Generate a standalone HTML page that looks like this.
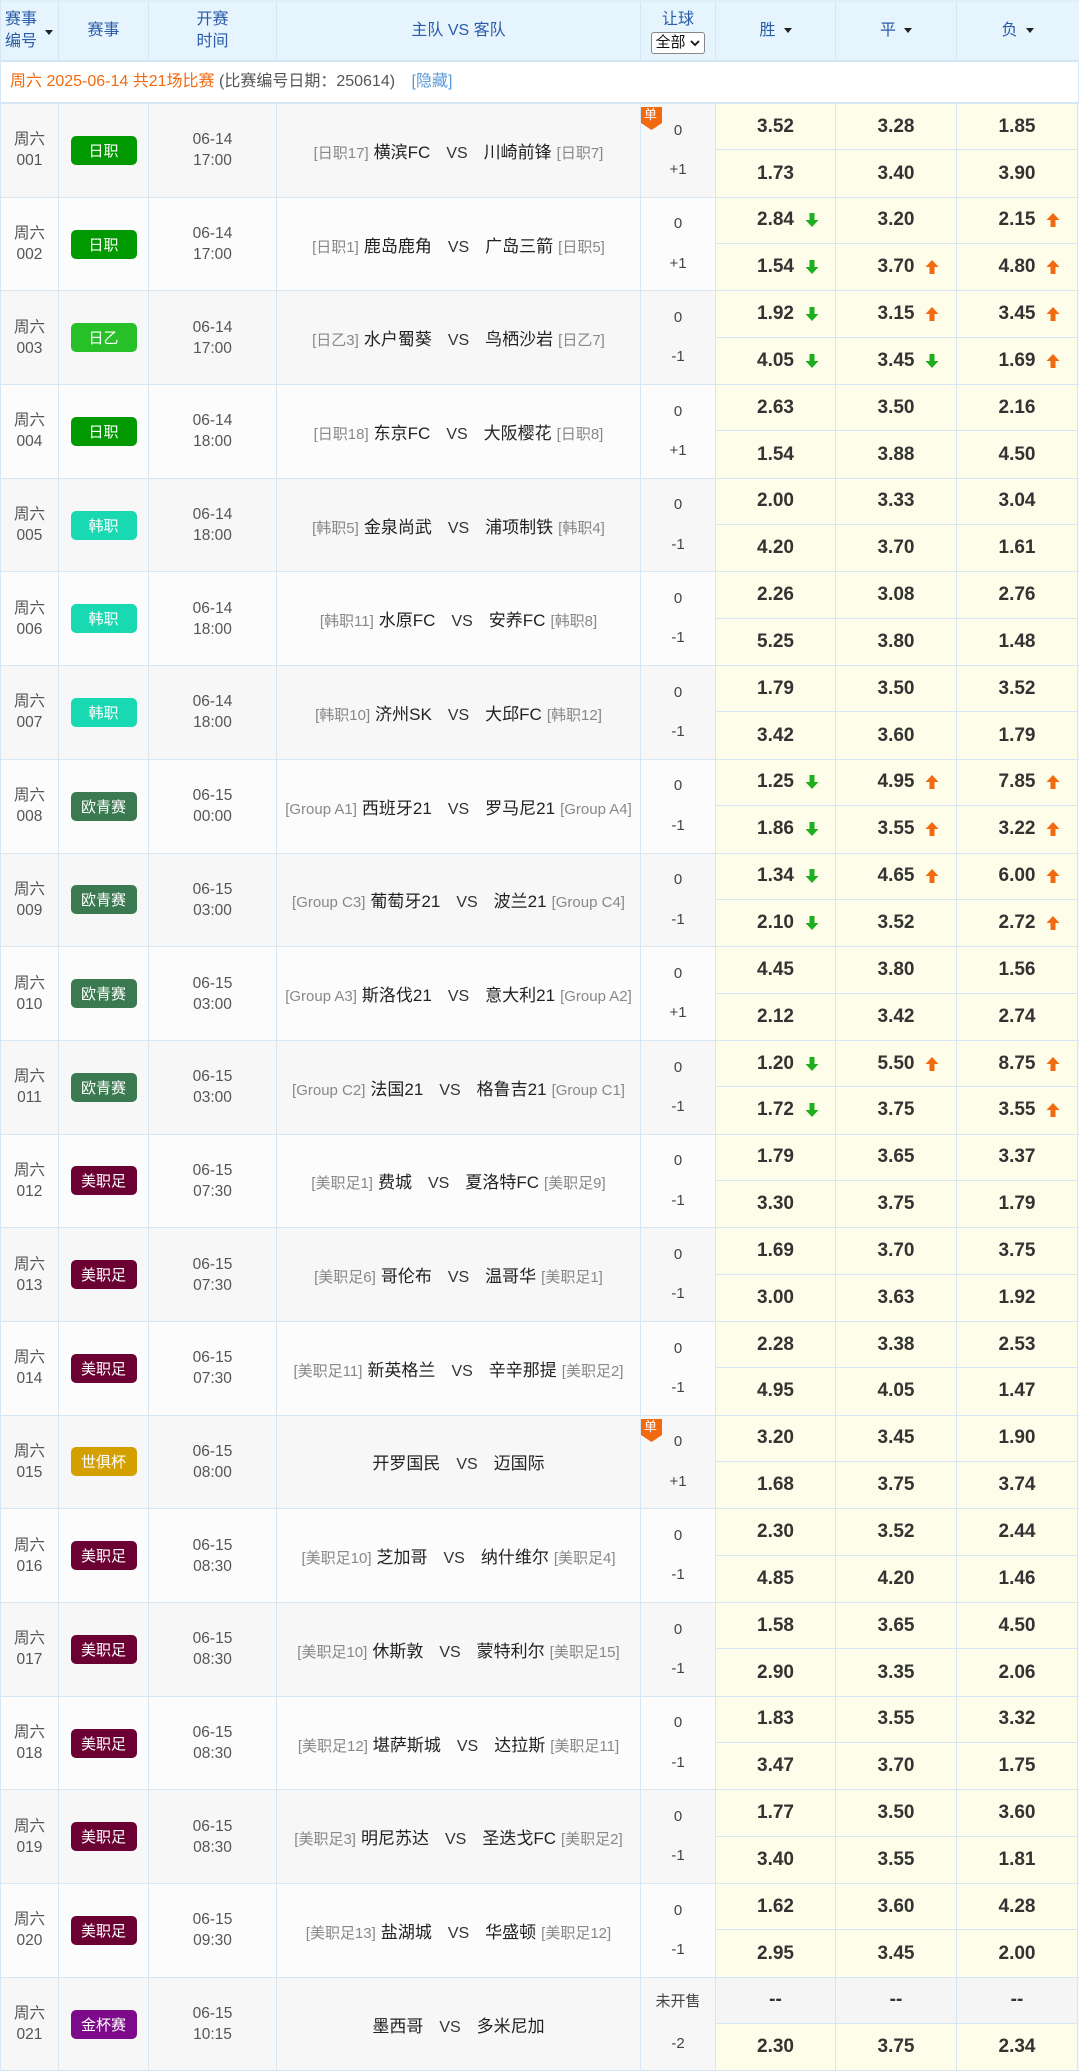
<!DOCTYPE html>
<html><head><meta charset="utf-8">
<style>
*{margin:0;padding:0;box-sizing:border-box}
body{width:1080px;height:2072px;overflow:hidden;background:#fff;font-family:"Liberation Sans","Noto Sans CJK SC",sans-serif;color:#333}
.wrap{width:1079px;border-left:1px solid #d6e6f4;border-top:2px solid #e0eefa}
.hd{display:grid;grid-template-columns:58px 90px 128px 364px 75px 120px 121px 121px;height:60px;background:#e5f4fd;border-bottom:2px solid #d3e6f4;overflow:hidden}
.hd>div{border-right:1px solid #d3e6f4;display:flex;align-items:center;justify-content:center;color:#2a5ca8;font-size:16px;line-height:22px;text-align:center;position:relative;white-space:nowrap}
.tri{display:inline-block;width:0;height:0;border-left:4px solid transparent;border-right:4px solid transparent;border-top:5px solid #222;margin-left:8px;vertical-align:middle}
.sel{display:flex;align-items:center;justify-content:center;border:1px solid #888;border-radius:3px;background:#fff;color:#111;font-size:15px;line-height:19px;width:54px;height:22px;margin:1px auto 0;white-space:nowrap}
.info{height:42px;border-bottom:2px solid #d6e6f4;border-right:1px solid #d6e6f4;padding-left:9px;font-size:16px;line-height:40px;color:#555;white-space:nowrap}
.info .o{color:#f26a10}.info .h{color:#5a9ad8;margin-left:12px}
.m{display:grid;grid-template-columns:58px 90px 128px 364px 75px 120px 121px 121px;grid-template-rows:1fr 1fr;height:93.7px;border-bottom:1px solid #d6e6f4;background:#fcfcfc}
.m.g{background:#f7f7f7}
.m>div{border-right:1px solid #d6e6f4;display:flex;align-items:center;justify-content:center;position:relative}
.m>div:nth-child(1){grid-area:1/1/3/2}
.m>div:nth-child(2){grid-area:1/2/3/3}
.m>div:nth-child(3){grid-area:1/3/3/4}
.m>div:nth-child(4){grid-area:1/4/3/5}
.m>div:nth-child(5){grid-area:1/5/2/6}
.m>div:nth-child(6){grid-area:2/5/3/6}
.m>div:nth-child(7){grid-area:1/6/2/7}
.m>div:nth-child(8){grid-area:1/7/2/8}
.m>div:nth-child(9){grid-area:1/8/2/9}
.m>div:nth-child(10){grid-area:2/6/3/7}
.m>div:nth-child(11){grid-area:2/7/3/8}
.m>div:nth-child(12){grid-area:2/8/3/9}
.n{color:#555;font-size:15.5px;line-height:21px;text-align:center}
.b{width:66px;height:29px;border-radius:5px;color:#fff;font-size:15px;display:flex;align-items:center;justify-content:center}
.t{font-size:17px;color:#222;white-space:nowrap}
.t i{font-style:normal;color:#888;font-size:15px}
.t .v{color:#333;font-size:16px;margin:0 16px}
.t .h{margin-left:5px}.t .a{margin-right:5px}
.r0{font-size:15px;color:#444;padding-top:6px}
.r1{font-size:15px;color:#444;padding-bottom:8px}
.od{background:#fdfde9;font-weight:bold;font-size:19px;color:#333;border-bottom:1px solid #d6e6f4}
.od.l{border-bottom:none}
.od svg{position:absolute;left:calc(50% + 29px);top:50%;margin-top:-8px}
.dan{position:absolute;left:0;top:3px}
.dz{position:absolute;left:3px;top:3px;color:#fff;font-size:13px;line-height:16px}
.gr{background:#f5f5f5}
</style></head><body>
<svg width="0" height="0" style="position:absolute"><defs>
<symbol id="up" viewBox="0 0 14 16"><path d="M7 1L13.5 8H9.5V15H4.5V8H0.5Z" fill="#f26a10"/></symbol>
<symbol id="dn" viewBox="0 0 14 16"><path d="M7 15L13.5 8H9.5V1H4.5V8H0.5Z" fill="#1fae1f"/></symbol>
<symbol id="dan" viewBox="0 0 21 23"><path d="M0 0H21V16L10.5 23L0 16Z" fill="#f26a10"/></symbol>
</defs></svg>
<div class="wrap">
<div class="hd">
<div style="justify-content:flex-start;padding-left:4px;text-align:left"><span>赛事<br>编号</span><span class="tri" style="position:absolute;left:44px;top:28px;margin:0"></span></div>
<div><span>赛事</span></div><div><span>开赛<br>时间</span></div><div><span>主队 VS 客队</span></div>
<div><span style="display:block">让球<span class="sel">全部<svg width="12" height="10" style="margin-left:3px"><path d="M2 3L6 7L10 3" stroke="#111" stroke-width="1.8" fill="none"/></svg></span></span></div>
<div><span>胜<span class="tri"></span></span></div><div><span>平<span class="tri"></span></span></div><div style="border-right:none"><span>负<span class="tri"></span></span></div>
</div>
<div class="info"><span class="o">周六 2025-06-14 共21场比赛</span> (比赛编号日期：250614) <span class="h">[隐藏]</span></div>

<div class="m g"><div class="n"><span>周六<br>001</span></div><div><span class="b" style="background:#009a00">日职</span></div><div class="n"><span>06-14<br>17:00</span></div><div class="t"><span><i>[日职17]</i><span class="h">横滨FC</span><span class="v">VS</span><span class="a">川崎前锋</span><i>[日职7]</i></span></div><div class="r0"><svg class="dan" width="21" height="23"><use href="#dan"/></svg><span class="dz">单</span><span>0</span></div><div class="r1">+1</div><div class="od">3.52</div><div class="od">3.28</div><div class="od">1.85</div><div class="od l">1.73</div><div class="od l">3.40</div><div class="od l">3.90</div></div>

<div class="m"><div class="n"><span>周六<br>002</span></div><div><span class="b" style="background:#009a00">日职</span></div><div class="n"><span>06-14<br>17:00</span></div><div class="t"><span><i>[日职1]</i><span class="h">鹿岛鹿角</span><span class="v">VS</span><span class="a">广岛三箭</span><i>[日职5]</i></span></div><div class="r0">0</div><div class="r1">+1</div><div class="od">2.84<svg width="14" height="16"><use href="#dn"/></svg></div><div class="od">3.20</div><div class="od">2.15<svg width="14" height="16"><use href="#up"/></svg></div><div class="od l">1.54<svg width="14" height="16"><use href="#dn"/></svg></div><div class="od l">3.70<svg width="14" height="16"><use href="#up"/></svg></div><div class="od l">4.80<svg width="14" height="16"><use href="#up"/></svg></div></div>

<div class="m g"><div class="n"><span>周六<br>003</span></div><div><span class="b" style="background:#28c028">日乙</span></div><div class="n"><span>06-14<br>17:00</span></div><div class="t"><span><i>[日乙3]</i><span class="h">水户蜀葵</span><span class="v">VS</span><span class="a">鸟栖沙岩</span><i>[日乙7]</i></span></div><div class="r0">0</div><div class="r1">-1</div><div class="od">1.92<svg width="14" height="16"><use href="#dn"/></svg></div><div class="od">3.15<svg width="14" height="16"><use href="#up"/></svg></div><div class="od">3.45<svg width="14" height="16"><use href="#up"/></svg></div><div class="od l">4.05<svg width="14" height="16"><use href="#dn"/></svg></div><div class="od l">3.45<svg width="14" height="16"><use href="#dn"/></svg></div><div class="od l">1.69<svg width="14" height="16"><use href="#up"/></svg></div></div>

<div class="m"><div class="n"><span>周六<br>004</span></div><div><span class="b" style="background:#009a00">日职</span></div><div class="n"><span>06-14<br>18:00</span></div><div class="t"><span><i>[日职18]</i><span class="h">东京FC</span><span class="v">VS</span><span class="a">大阪樱花</span><i>[日职8]</i></span></div><div class="r0">0</div><div class="r1">+1</div><div class="od">2.63</div><div class="od">3.50</div><div class="od">2.16</div><div class="od l">1.54</div><div class="od l">3.88</div><div class="od l">4.50</div></div>

<div class="m g"><div class="n"><span>周六<br>005</span></div><div><span class="b" style="background:#19d9b2">韩职</span></div><div class="n"><span>06-14<br>18:00</span></div><div class="t"><span><i>[韩职5]</i><span class="h">金泉尚武</span><span class="v">VS</span><span class="a">浦项制铁</span><i>[韩职4]</i></span></div><div class="r0">0</div><div class="r1">-1</div><div class="od">2.00</div><div class="od">3.33</div><div class="od">3.04</div><div class="od l">4.20</div><div class="od l">3.70</div><div class="od l">1.61</div></div>

<div class="m"><div class="n"><span>周六<br>006</span></div><div><span class="b" style="background:#19d9b2">韩职</span></div><div class="n"><span>06-14<br>18:00</span></div><div class="t"><span><i>[韩职11]</i><span class="h">水原FC</span><span class="v">VS</span><span class="a">安养FC</span><i>[韩职8]</i></span></div><div class="r0">0</div><div class="r1">-1</div><div class="od">2.26</div><div class="od">3.08</div><div class="od">2.76</div><div class="od l">5.25</div><div class="od l">3.80</div><div class="od l">1.48</div></div>

<div class="m g"><div class="n"><span>周六<br>007</span></div><div><span class="b" style="background:#19d9b2">韩职</span></div><div class="n"><span>06-14<br>18:00</span></div><div class="t"><span><i>[韩职10]</i><span class="h">济州SK</span><span class="v">VS</span><span class="a">大邱FC</span><i>[韩职12]</i></span></div><div class="r0">0</div><div class="r1">-1</div><div class="od">1.79</div><div class="od">3.50</div><div class="od">3.52</div><div class="od l">3.42</div><div class="od l">3.60</div><div class="od l">1.79</div></div>

<div class="m"><div class="n"><span>周六<br>008</span></div><div><span class="b" style="background:#3b7a50">欧青赛</span></div><div class="n"><span>06-15<br>00:00</span></div><div class="t"><span><i>[Group A1]</i><span class="h">西班牙21</span><span class="v">VS</span><span class="a">罗马尼21</span><i>[Group A4]</i></span></div><div class="r0">0</div><div class="r1">-1</div><div class="od">1.25<svg width="14" height="16"><use href="#dn"/></svg></div><div class="od">4.95<svg width="14" height="16"><use href="#up"/></svg></div><div class="od">7.85<svg width="14" height="16"><use href="#up"/></svg></div><div class="od l">1.86<svg width="14" height="16"><use href="#dn"/></svg></div><div class="od l">3.55<svg width="14" height="16"><use href="#up"/></svg></div><div class="od l">3.22<svg width="14" height="16"><use href="#up"/></svg></div></div>

<div class="m g"><div class="n"><span>周六<br>009</span></div><div><span class="b" style="background:#3b7a50">欧青赛</span></div><div class="n"><span>06-15<br>03:00</span></div><div class="t"><span><i>[Group C3]</i><span class="h">葡萄牙21</span><span class="v">VS</span><span class="a">波兰21</span><i>[Group C4]</i></span></div><div class="r0">0</div><div class="r1">-1</div><div class="od">1.34<svg width="14" height="16"><use href="#dn"/></svg></div><div class="od">4.65<svg width="14" height="16"><use href="#up"/></svg></div><div class="od">6.00<svg width="14" height="16"><use href="#up"/></svg></div><div class="od l">2.10<svg width="14" height="16"><use href="#dn"/></svg></div><div class="od l">3.52</div><div class="od l">2.72<svg width="14" height="16"><use href="#up"/></svg></div></div>

<div class="m"><div class="n"><span>周六<br>010</span></div><div><span class="b" style="background:#3b7a50">欧青赛</span></div><div class="n"><span>06-15<br>03:00</span></div><div class="t"><span><i>[Group A3]</i><span class="h">斯洛伐21</span><span class="v">VS</span><span class="a">意大利21</span><i>[Group A2]</i></span></div><div class="r0">0</div><div class="r1">+1</div><div class="od">4.45</div><div class="od">3.80</div><div class="od">1.56</div><div class="od l">2.12</div><div class="od l">3.42</div><div class="od l">2.74</div></div>

<div class="m g"><div class="n"><span>周六<br>011</span></div><div><span class="b" style="background:#3b7a50">欧青赛</span></div><div class="n"><span>06-15<br>03:00</span></div><div class="t"><span><i>[Group C2]</i><span class="h">法国21</span><span class="v">VS</span><span class="a">格鲁吉21</span><i>[Group C1]</i></span></div><div class="r0">0</div><div class="r1">-1</div><div class="od">1.20<svg width="14" height="16"><use href="#dn"/></svg></div><div class="od">5.50<svg width="14" height="16"><use href="#up"/></svg></div><div class="od">8.75<svg width="14" height="16"><use href="#up"/></svg></div><div class="od l">1.72<svg width="14" height="16"><use href="#dn"/></svg></div><div class="od l">3.75</div><div class="od l">3.55<svg width="14" height="16"><use href="#up"/></svg></div></div>

<div class="m"><div class="n"><span>周六<br>012</span></div><div><span class="b" style="background:#6b0033">美职足</span></div><div class="n"><span>06-15<br>07:30</span></div><div class="t"><span><i>[美职足1]</i><span class="h">费城</span><span class="v">VS</span><span class="a">夏洛特FC</span><i>[美职足9]</i></span></div><div class="r0">0</div><div class="r1">-1</div><div class="od">1.79</div><div class="od">3.65</div><div class="od">3.37</div><div class="od l">3.30</div><div class="od l">3.75</div><div class="od l">1.79</div></div>

<div class="m g"><div class="n"><span>周六<br>013</span></div><div><span class="b" style="background:#6b0033">美职足</span></div><div class="n"><span>06-15<br>07:30</span></div><div class="t"><span><i>[美职足6]</i><span class="h">哥伦布</span><span class="v">VS</span><span class="a">温哥华</span><i>[美职足1]</i></span></div><div class="r0">0</div><div class="r1">-1</div><div class="od">1.69</div><div class="od">3.70</div><div class="od">3.75</div><div class="od l">3.00</div><div class="od l">3.63</div><div class="od l">1.92</div></div>

<div class="m"><div class="n"><span>周六<br>014</span></div><div><span class="b" style="background:#6b0033">美职足</span></div><div class="n"><span>06-15<br>07:30</span></div><div class="t"><span><i>[美职足11]</i><span class="h">新英格兰</span><span class="v">VS</span><span class="a">辛辛那提</span><i>[美职足2]</i></span></div><div class="r0">0</div><div class="r1">-1</div><div class="od">2.28</div><div class="od">3.38</div><div class="od">2.53</div><div class="od l">4.95</div><div class="od l">4.05</div><div class="od l">1.47</div></div>

<div class="m g"><div class="n"><span>周六<br>015</span></div><div><span class="b" style="background:#d4a000">世俱杯</span></div><div class="n"><span>06-15<br>08:00</span></div><div class="t"><span><span class="h">开罗国民</span><span class="v">VS</span><span class="a">迈国际</span></span></div><div class="r0"><svg class="dan" width="21" height="23"><use href="#dan"/></svg><span class="dz">单</span><span>0</span></div><div class="r1">+1</div><div class="od">3.20</div><div class="od">3.45</div><div class="od">1.90</div><div class="od l">1.68</div><div class="od l">3.75</div><div class="od l">3.74</div></div>

<div class="m"><div class="n"><span>周六<br>016</span></div><div><span class="b" style="background:#6b0033">美职足</span></div><div class="n"><span>06-15<br>08:30</span></div><div class="t"><span><i>[美职足10]</i><span class="h">芝加哥</span><span class="v">VS</span><span class="a">纳什维尔</span><i>[美职足4]</i></span></div><div class="r0">0</div><div class="r1">-1</div><div class="od">2.30</div><div class="od">3.52</div><div class="od">2.44</div><div class="od l">4.85</div><div class="od l">4.20</div><div class="od l">1.46</div></div>

<div class="m g"><div class="n"><span>周六<br>017</span></div><div><span class="b" style="background:#6b0033">美职足</span></div><div class="n"><span>06-15<br>08:30</span></div><div class="t"><span><i>[美职足10]</i><span class="h">休斯敦</span><span class="v">VS</span><span class="a">蒙特利尔</span><i>[美职足15]</i></span></div><div class="r0">0</div><div class="r1">-1</div><div class="od">1.58</div><div class="od">3.65</div><div class="od">4.50</div><div class="od l">2.90</div><div class="od l">3.35</div><div class="od l">2.06</div></div>

<div class="m"><div class="n"><span>周六<br>018</span></div><div><span class="b" style="background:#6b0033">美职足</span></div><div class="n"><span>06-15<br>08:30</span></div><div class="t"><span><i>[美职足12]</i><span class="h">堪萨斯城</span><span class="v">VS</span><span class="a">达拉斯</span><i>[美职足11]</i></span></div><div class="r0">0</div><div class="r1">-1</div><div class="od">1.83</div><div class="od">3.55</div><div class="od">3.32</div><div class="od l">3.47</div><div class="od l">3.70</div><div class="od l">1.75</div></div>

<div class="m g"><div class="n"><span>周六<br>019</span></div><div><span class="b" style="background:#6b0033">美职足</span></div><div class="n"><span>06-15<br>08:30</span></div><div class="t"><span><i>[美职足3]</i><span class="h">明尼苏达</span><span class="v">VS</span><span class="a">圣迭戈FC</span><i>[美职足2]</i></span></div><div class="r0">0</div><div class="r1">-1</div><div class="od">1.77</div><div class="od">3.50</div><div class="od">3.60</div><div class="od l">3.40</div><div class="od l">3.55</div><div class="od l">1.81</div></div>

<div class="m"><div class="n"><span>周六<br>020</span></div><div><span class="b" style="background:#6b0033">美职足</span></div><div class="n"><span>06-15<br>09:30</span></div><div class="t"><span><i>[美职足13]</i><span class="h">盐湖城</span><span class="v">VS</span><span class="a">华盛顿</span><i>[美职足12]</i></span></div><div class="r0">0</div><div class="r1">-1</div><div class="od">1.62</div><div class="od">3.60</div><div class="od">4.28</div><div class="od l">2.95</div><div class="od l">3.45</div><div class="od l">2.00</div></div>

<div class="m g"><div class="n"><span>周六<br>021</span></div><div><span class="b" style="background:#7d0a8a">金杯赛</span></div><div class="n"><span>06-15<br>10:15</span></div><div class="t"><span><span class="h">墨西哥</span><span class="v">VS</span><span class="a">多米尼加</span></span></div><div class="r0" style="padding-top:0">未开售</div><div class="r1">-2</div><div class="od gr">--</div><div class="od gr">--</div><div class="od gr">--</div><div class="od l">2.30</div><div class="od l">3.75</div><div class="od l">2.34</div></div>
</div>
</body></html>
